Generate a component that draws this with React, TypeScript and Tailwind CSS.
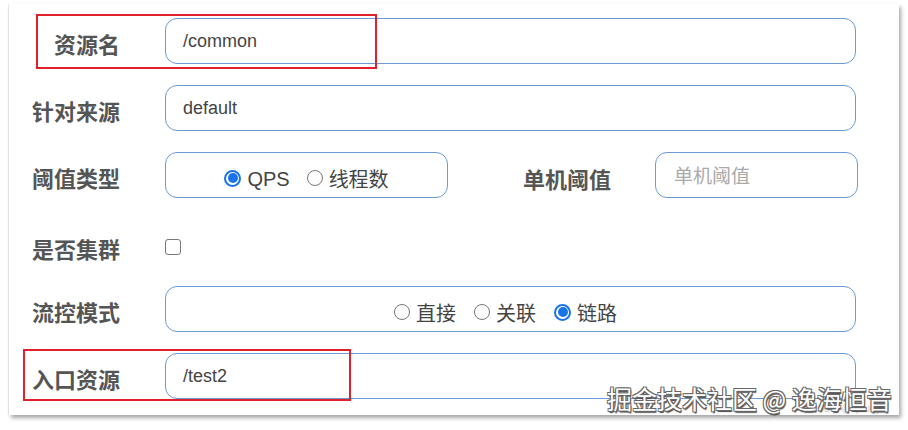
import React from "react";

const cjk = { fontFamily: '"Noto Sans CJK SC", "Noto Sans", sans-serif' };
const latin = { fontFamily: '"Liberation Sans", "Noto Sans CJK SC", sans-serif' };

function Label({ children }: { children: React.ReactNode }) {
  return (
    <div
      className="w-[111px] shrink-0 text-right text-[22px] font-bold leading-none text-[#555555] mt-[4px]"
      style={cjk}
    >
      {children}
    </div>
  );
}

function Radio({ checked, label }: { checked?: boolean; label: string }) {
  return (
    <div className="flex items-center gap-[6px]">
      {checked ? (
        <span className="w-[17px] h-[17px] rounded-full border-[2px] border-[#1a73e8] flex items-center justify-center">
          <span className="w-[10px] h-[10px] rounded-full bg-[#1a73e8]" />
        </span>
      ) : (
        <span className="w-[16px] h-[16px] rounded-full border border-[#777777] bg-white" />
      )}
      <span className="text-[20px] leading-none text-[#444444] mt-[2px]" style={label === "QPS" ? latin : cjk}>
        {label}
      </span>
    </div>
  );
}

const box = "h-[46px] rounded-[12px] border border-[#6b9bd2] bg-white";

export default function App() {
  return (
    <div className="relative w-[908px] h-[430px] bg-white overflow-hidden">
      <div className="ml-[9px] mt-[4px] w-[890px] h-[411px] bg-white shadow-[2px_3px_4px_rgba(0,0,0,0.35),-1px_0_0_rgba(0,0,0,0.08)] pt-[14px] flex flex-col gap-[21px]">
        <div className="flex items-center">
          <Label>资源名</Label>
          <div className={`${box} ml-[45px] w-[691px] flex items-center pl-[17px]`}>
            <span className="text-[18px] text-[#444444]" style={latin}>/common</span>
          </div>
        </div>
        <div className="flex items-center">
          <Label>针对来源</Label>
          <div className={`${box} ml-[45px] w-[691px] flex items-center pl-[17px]`}>
            <span className="text-[18px] text-[#444444]" style={latin}>default</span>
          </div>
        </div>
        <div className="flex items-center">
          <Label>阈值类型</Label>
          <div className={`${box} ml-[45px] w-[283px] flex items-center justify-center gap-[17px] pt-[6px]`}>
            <Radio checked label="QPS" />
            <Radio label="线程数" />
          </div>
          <div className="w-[163px] shrink-0 text-right text-[22px] font-bold leading-none text-[#555555] mt-[5px]" style={cjk}>
            单机阈值
          </div>
          <div className={`${box} ml-[44px] w-[203px] flex items-center pl-[18px]`}>
            <span className="text-[19px] text-[#aaaaaa]" style={cjk}>单机阈值</span>
          </div>
        </div>
        <div className="flex items-center h-[46px] pt-[8px]">
          <Label>是否集群</Label>
          <div className="ml-[45px] w-[16px] h-[16px] rounded-[3px] border border-[#777777] bg-white mt-[2px]" />
        </div>
        <div className="flex items-center">
          <Label>流控模式</Label>
          <div className={`${box} ml-[45px] w-[691px] flex items-center justify-center gap-[18px] pr-[10px] pt-[6px]`}>
            <Radio label="直接" />
            <Radio label="关联" />
            <Radio checked label="链路" />
          </div>
        </div>
        <div className="flex items-center">
          <Label>入口资源</Label>
          <div className={`${box} ml-[45px] w-[691px] flex items-center pl-[17px]`}>
            <span className="text-[18px] text-[#444444]" style={latin}>/test2</span>
          </div>
        </div>
      </div>

      <div className="absolute left-[36px] top-[14px] w-[341px] h-[55px] border-[2px] border-[#e0202a]" />
      <div className="absolute left-[23px] top-[349px] w-[328px] h-[52px] border-[2px] border-[#e0202a]" />

      <div
        className="absolute left-[810px] top-[404px] text-[10px] leading-none text-[#d0d0d0]"
        style={latin}
      >
        CSDN @lipruoyu
      </div>
      <div
        className="absolute left-[607px] top-[386px] text-[25px] leading-none text-white whitespace-nowrap [text-shadow:-1px_-1px_0_#666,1px_-1px_0_#666,-1px_1px_0_#666,1px_1px_0_#666,1px_2px_1px_#444]"
        style={cjk}
      >
        掘金技术社区 @ 逸海恒音
      </div>
    </div>
  );
}
